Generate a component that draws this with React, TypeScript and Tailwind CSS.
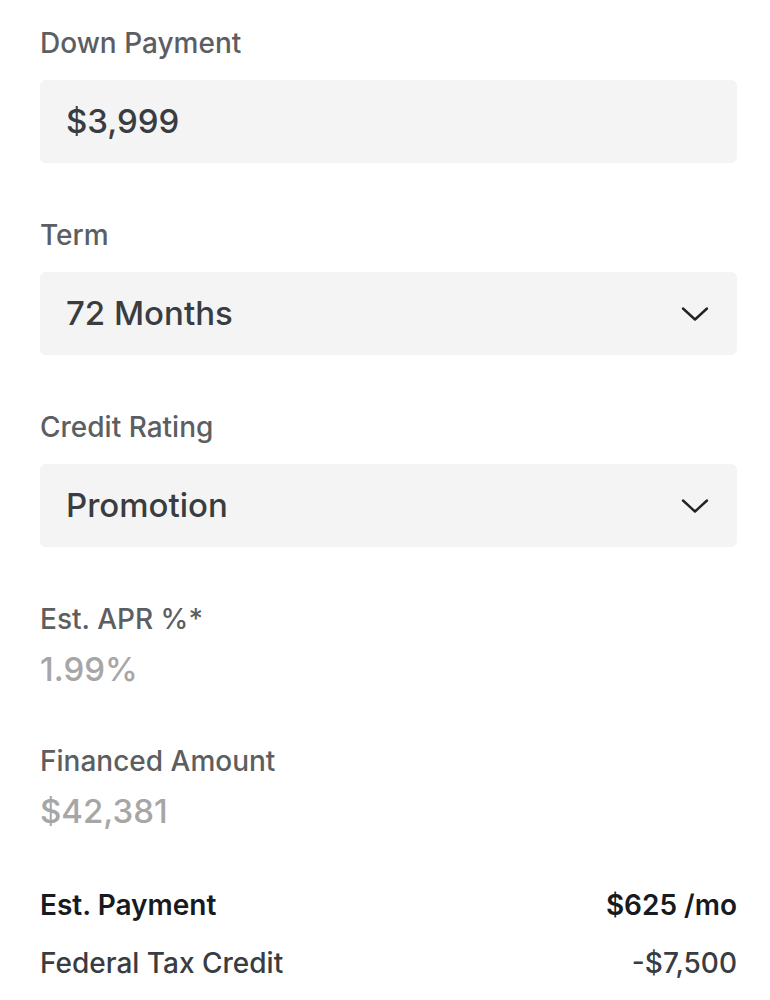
import React from "react";

function Chevron() {
  return (
    <svg width="28" height="16" viewBox="0 0 28 16" fill="none" className="shrink-0">
      <path d="M2 2.5 L14 13.5 L26 2.5" stroke="#222" strokeWidth="2.4" strokeLinecap="round" strokeLinejoin="round" />
    </svg>
  );
}

function Label({ children }: { children: React.ReactNode }) {
  return <div className="text-[28px] leading-[34px] text-[#5c5e62] font-medium">{children}</div>;
}

export default function App() {
  return (
    <div className="w-[770px] h-[1000px] bg-white px-[40px] pt-[26px]" style={{ fontFamily: "Inter, 'Noto Sans', sans-serif" }}>
      <Label>Down Payment</Label>
      <div className="mt-[20px] h-[83px] rounded-[6px] bg-[#f4f4f4] flex items-center px-[26px] w-[697px]">
        <span className="text-[33px] font-medium text-[#393c41]">$3,999</span>
      </div>

      <div className="mt-[55px]"><Label>Term</Label></div>
      <div className="mt-[20px] h-[83px] rounded-[6px] bg-[#f4f4f4] flex items-center justify-between pl-[26px] pr-[28px] w-[697px]">
        <span className="text-[33px] font-medium text-[#393c41]">72 Months</span>
        <Chevron />
      </div>

      <div className="mt-[55px]"><Label>Credit Rating</Label></div>
      <div className="mt-[20px] h-[83px] rounded-[6px] bg-[#f4f4f4] flex items-center justify-between pl-[26px] pr-[28px] w-[697px]">
        <span className="text-[33px] font-medium text-[#393c41]">Promotion</span>
        <Chevron />
      </div>

      <div className="mt-[55px]"><Label>Est. APR %*</Label></div>
      <div className="mt-[13px] text-[33px] leading-[40px] font-medium text-[#a6a6a6]">1.99%</div>

      <div className="mt-[55px]"><Label>Financed Amount</Label></div>
      <div className="mt-[13px] text-[33px] leading-[40px] font-medium text-[#a6a6a6]">$42,381</div>

      <div className="w-[697px]">
        <div className="mt-[56px] flex justify-between text-[28px] leading-[36px] font-semibold text-[#171a20]">
          <span>Est. Payment</span>
          <span>$625 /mo</span>
        </div>
        <div className="mt-[22px] flex justify-between text-[28px] leading-[36px] font-medium text-[#393c41]">
          <span>Federal Tax Credit</span>
          <span>-$7,500</span>
        </div>
      </div>
    </div>
  );
}
